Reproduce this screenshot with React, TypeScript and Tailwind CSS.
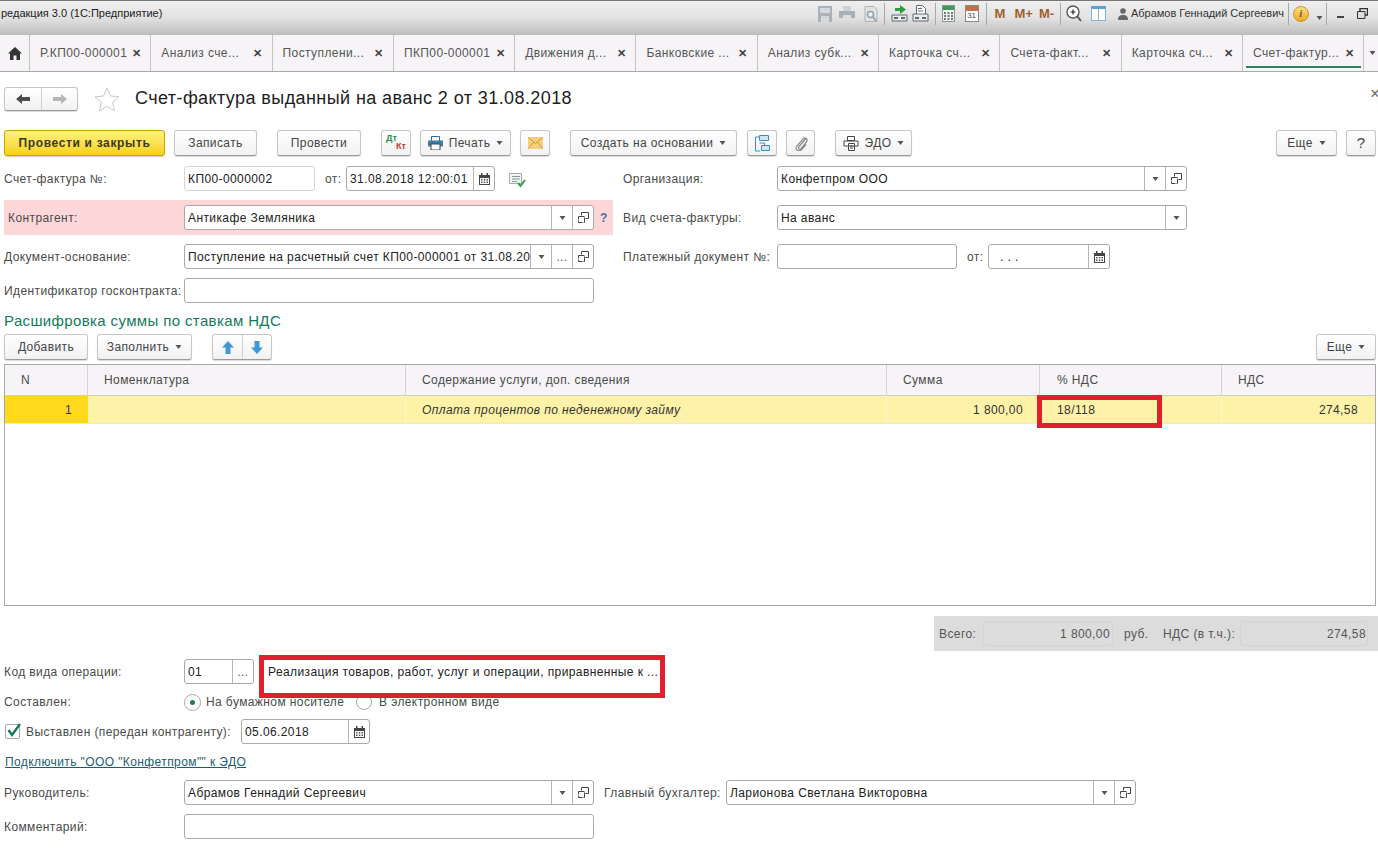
import React from "react";

const Caret = ({ className = "" }: { className?: string }) => (
  <svg width="7" height="4" viewBox="0 0 7 4" className={className}>
    <path d="M0.5 0h6L3.5 4z" fill="#555" />
  </svg>
);

const OpenIcon = () => (
  <svg width="11" height="11" viewBox="0 0 11 11" fill="none" stroke="#444">
    <path d="M3.5 3.5V.5h7v6H7.5" />
    <path d="M.5 4.5h6v6h-6z" fill="none" strokeDasharray="6 1" />
  </svg>
);

const CalIcon = () => (
  <svg width="11" height="12" viewBox="0 0 11 12">
    <path d="M0 2h11v10H0z" fill="#444" />
    <path d="M2 0h1.500v3H2zM7.500 0H9v3H7.500z" fill="#444" />
    <path d="M1 5h9v6H1z" fill="#fff" />
    <path d="M2 6h1.500v1.500H2zM4.800 6h1.500v1.500H4.800zM7.500 6H9v1.500H7.500zM2 8.500h1.500V10H2zM4.800 8.500h1.500V10H4.800zM7.500 8.500H9V10H7.500z" fill="#555" />
  </svg>
);

type FieldBtn = "caret" | "open" | "dots" | "cal";

const Field = ({
  w,
  value,
  btns = [],
  btnW = 21,
  light = false,
  pl = "pl-[3px]",
}: {
  w: string;
  value?: string;
  btns?: FieldBtn[];
  btnW?: number;
  light?: boolean;
  pl?: string;
}) => (
  <div
    className={`${w} h-[25px] shrink-0 flex rounded-[3px] border bg-white overflow-hidden ${
      light ? "border-[#d6d6d6]" : "border-[#a9a9a9]"
    }`}
  >
    <div className={`flex-1 min-w-0 ${pl} flex items-center whitespace-nowrap overflow-hidden text-[#222]`}>
      {value}
    </div>
    {btns.map((b, i) => (
      <div
        key={i}
        style={{ width: btnW }}
        className="shrink-0 border-l border-[#b5b5b5] flex items-center justify-center text-[#555]"
      >
        {b === "caret" && <Caret />}
        {b === "open" && <OpenIcon />}
        {b === "dots" && <span className="leading-none">...</span>}
        {b === "cal" && <CalIcon />}
      </div>
    ))}
  </div>
);

const Btn = ({
  w,
  children,
  caret,
  className = "",
}: {
  w: string;
  children: React.ReactNode;
  caret?: boolean;
  className?: string;
}) => (
  <div
    className={`${w} h-[26px] shrink-0 flex items-center justify-center gap-[6px] rounded-[3px] border border-[#c6c6c6] border-b-[#9a9a9a] bg-gradient-to-b from-white to-[#f1f1f1] shadow-[0_1px_1px_rgba(0,0,0,0.15)] text-[#444] ${className}`}
  >
    {children}
    {caret && <Caret />}
  </div>
);

const tabs = [
  "Р.КП00-000001",
  "Анализ сче...",
  "Поступлени...",
  "ПКП00-000001",
  "Движения д...",
  "Банковские ...",
  "Анализ субк...",
  "Карточка сч...",
  "Счета-факт...",
  "Карточка сч...",
  "Счет-фактур...",
];

const Gap = ({ w }: { w: string }) => <div className={`${w} shrink-0`} />;

const Sep = ({ className }: { className: string }) => (
  <div className={`w-px h-[22px] bg-[#a8a8a8] shrink-0 ${className}`} />
);

const TopIcons = () => (
  <div className="flex items-center h-full">
    <svg width="14" height="16" viewBox="0 0 14 16">
      <path d="M0 0h14v16H0z" fill="#aab2b8" />
      <path d="M2 2h10v5H2zM3 10h8v6H3z" fill="#d5d9dc" />
    </svg>
    <svg width="16" height="15" viewBox="0 0 16 15" className="ml-[7px]">
      <path d="M4 0h8v5H4z" fill="#cfd3d6" />
      <path d="M0 5h16v7H0z" fill="#a9b0b5" />
      <path d="M4 9h8v6H4z" fill="#dcdfe1" />
    </svg>
    <svg width="14" height="16" viewBox="0 0 14 16" className="ml-[9px]">
      <path d="M1 .5h9l3 3v12H1z" fill="#e2e2e2" stroke="#aeb4b8" />
      <circle cx="6.500" cy="8.500" r="3" fill="#eef3f6" stroke="#8aa0ad" strokeWidth="1.500" />
      <path d="M9 11l3 4" stroke="#8aa0ad" strokeWidth="1.500" />
    </svg>
    <Sep className="ml-[6px]" />
    <svg width="17" height="17" viewBox="0 0 17 17" className="ml-[6px]">
      <path d="M1 10h15v6H1z" fill="#e8eaeb" stroke="#5f6b73" />
      <path d="M3 12h4v2H3zM10 12h4v2h-4z" fill="#5f6b73" />
      <path d="M6 3H1v3h5v3l6-4.500L6 0z" fill="#2f9b3c" transform="translate(3 0)" />
    </svg>
    <svg width="17" height="17" viewBox="0 0 17 17" className="ml-[4px]">
      <path d="M4.500.5h6l3 3v6h-9z" fill="#fff" stroke="#5f6b73" />
      <path d="M1 9h15v7H1z" fill="#e8eaeb" stroke="#5f6b73" />
      <path d="M3 12h4v2H3zM10 12h4v2h-4zM6 3h4v1H6zM6 5.500h5v1H6z" fill="#5f6b73" />
    </svg>
    <Sep className="ml-[6px]" />
    <svg width="13" height="17" viewBox="0 0 13 17" className="ml-[6px]">
      <path d="M0 0h13v17H0z" fill="#8a9a92" />
      <path d="M1 1h11v4H1z" fill="#3d9a5a" />
      <path d="M1 5h11v11H1z" fill="#f3f3f3" />
      <path d="M2 7h2v2H2zM5.500 7h2v2h-2zM9 7h2v2H9zM2 10h2v2H2zM5.500 10h2v2h-2zM9 10h2v2H9zM2 13h2v2H2zM5.500 13h2v2h-2zM9 13h2v2H9z" fill="#6f7f77" />
    </svg>
    <div className="ml-[10px] w-[14px] h-[17px] border border-[#888] bg-white relative flex items-end justify-center">
      <div className="absolute top-0 inset-x-0 h-[5px] bg-[#c2704a]" />
      <span className="text-[8px] leading-[11px] tracking-normal text-[#445]">31</span>
    </div>
    <Sep className="ml-[7px]" />
    <span className="ml-[8px] text-[13px] tracking-normal font-bold text-[#a0602e]">М</span>
    <span className="ml-[9px] text-[13px] tracking-normal font-bold text-[#a0602e]">М+</span>
    <span className="ml-[6px] text-[13px] tracking-normal font-bold text-[#a0602e]">М-</span>
    <Sep className="ml-[6px]" />
    <svg width="16" height="17" viewBox="0 0 16 17" className="ml-[5px]">
      <circle cx="7" cy="7" r="6" fill="#fff" stroke="#555" strokeWidth="1.400" />
      <path d="M4.500 7h5M7 4.500v5" stroke="#222" strokeWidth="1.200" />
      <path d="M11 11l4 5" stroke="#555" strokeWidth="2" />
    </svg>
    <div className="ml-[9px] w-[15px] h-[15px] border border-[#7fb2d4] border-t-[3px] border-t-[#5da3d2] flex bg-white">
      <div className="w-1/2 border-r border-[#7fb2d4]" />
    </div>
    <svg width="10" height="12" viewBox="0 0 10 12" className="ml-[12px]">
      <circle cx="5" cy="3" r="2.800" fill="#666" />
      <path d="M0 12c0-4 2-5 5-5s5 1 5 5z" fill="#666" />
    </svg>
    <span className="ml-[3px] text-[#333] text-[11px] tracking-[-0.03px]">Абрамов Геннадий Сергеевич</span>
    <Sep className="ml-[4px]" />
    <div className="ml-[4px] w-[16px] h-[16px] rounded-full bg-gradient-to-b from-[#fbdf7e] to-[#eaa91f] border border-[#c9962c] flex items-center justify-center text-[11px] font-bold italic leading-none text-[#7c5a10] font-['Liberation_Serif']">
      i
    </div>
    <Caret className="ml-[7px] mt-[8px]" />
    <Sep className="ml-[3px]" />
    <div className="ml-[10px] mt-[6px] w-[7px] h-[2px] bg-[#444]" />
    <svg width="11" height="11" viewBox="0 0 11 11" className="ml-[13px]" fill="none" stroke="#333">
      <path d="M3 3V.5h7.500v6.500H8" strokeWidth="1.400" />
      <path d="M.5 3.500H8v7H.5z" fill="#ddd" />
    </svg>
  </div>
);

export default function App() {
  return (
    <div className="w-[1378px] h-[848px] overflow-hidden bg-white relative text-[12px] tracking-[0.4px] text-[#4a4a4a] font-['Liberation_Sans',Arial,sans-serif]">
      {/* заголовок окна */}
      <div className="h-[35px] border-t border-[#777] bg-gradient-to-b from-[#efefef] via-[#e2e2e2] to-[#bdbdbd] flex items-center justify-between pb-[9px]">
        <span className="pl-[1px] text-[#222] text-[11px] tracking-normal">редакция 3.0 (1С:Предприятие)</span>
        <div className="pr-[10px] h-full flex items-center">
          <TopIcons />
        </div>
      </div>

      {/* панель открытых */}
      <div className="h-[37px] flex bg-[#f6f4f7] border-b border-[#a9a9a9]">
        <div className="w-[30px] shrink-0 border-r border-[#c4c4c4] flex items-center justify-center">
          <svg width="14" height="13" viewBox="0 0 14 13">
            <path d="M7 0l7 6.500h-2V13H8.500V8.500h-3V13H2V6.500H0z" fill="#333" />
          </svg>
        </div>
        {tabs.map((t, i) => (
          <div
            key={i}
            className="w-[121.300px] shrink-0 border-r border-[#c4c4c4] flex items-center justify-between pl-[10px] pr-[9px] relative whitespace-nowrap text-[#555]"
          >
            <span>{t}</span>
            <span className="text-[#444] font-bold text-[11px]">✕</span>
            {i === tabs.length - 1 && (
              <div className="absolute left-[3px] right-[2px] bottom-[3px] h-[2px] bg-[#2f7f5f]" />
            )}
          </div>
        ))}
        <div className="flex-1 flex items-center justify-end pr-[2px]">
          <Caret />
        </div>
      </div>

      {/* название документа */}
      <div className="h-[50px] flex items-center pl-[4px] pt-[3px] relative">
        <div className="w-[74px] h-[24px] flex rounded-[3px] border border-[#c6c6c6] border-b-[#9a9a9a] bg-gradient-to-b from-white to-[#f1f1f1] shadow-[0_1px_1px_rgba(0,0,0,0.15)]">
          <div className="w-[37px] border-r border-[#d0d0d0] flex items-center justify-center">
            <svg width="14" height="10" viewBox="0 0 14 10">
              <path d="M0 5l6-5v3h8v4H6v3z" fill="#4d4d4d" />
            </svg>
          </div>
          <div className="flex-1 flex items-center justify-center">
            <svg width="14" height="10" viewBox="0 0 14 10">
              <path d="M14 5L8 0v3H0v4h8v3z" fill="#b5b5b5" />
            </svg>
          </div>
        </div>
        <svg width="26" height="24" viewBox="0 0 26 24" className="ml-[16px]">
          <path d="M13 1l3.500 8 8.500.8-6.400 5.700 1.900 8.300L13 19.400l-7.500 4.400 1.900-8.300L1 9.800 9.500 9z" fill="#fff" stroke="#c9c9c9" />
        </svg>
        <span className="ml-[15px] text-[18px] tracking-[0.41px] text-[#1d1d1d]">Счет-фактура выданный на аванс 2 от 31.08.2018</span>
        <span className="absolute -right-[2px] top-[10px] text-[#666] text-[16px]">×</span>
      </div>

      {/* командная панель */}
      <div className="mt-[8px] pl-[4px] pr-[2px] h-[26px] flex items-center">
        <div className="w-[161px] h-[26px] flex items-center justify-center rounded-[3px] border border-[#c9a400] bg-gradient-to-b from-[#fff27a] to-[#f7d100] shadow-[0_1px_1px_rgba(0,0,0,0.2)] font-bold tracking-[0.65px] text-[#3a3a1a]">
          Провести и закрыть
        </div>
        <Gap w="w-[9px]" />
        <Btn w="w-[83px]">Записать</Btn>
        <Gap w="w-[20px]" />
        <Btn w="w-[84px]">Провести</Btn>
        <Gap w="w-[20px]" />
        <Btn w="w-[30px]">
          <span className="relative block w-[20px] h-[20px] text-[9px] tracking-normal font-bold leading-none">
            <span className="absolute left-0 top-[1px] text-[#2d8a4a]">Дт</span>
            <span className="absolute right-0 top-[9px] text-[#c23a3a]">Кт</span>
          </span>
        </Btn>
        <Gap w="w-[9px]" />
        <Btn w="w-[91px]" caret>
          <svg width="15" height="14" viewBox="0 0 15 14">
            <path d="M3.500 .5h8v5h-8z" fill="#fff" stroke="#2f6d8f" />
            <path d="M0 4.500h15v6H0z" fill="#3d7fa3" />
            <path d="M3 8h9v6H3z" fill="#fff" stroke="#444" />
          </svg>
          Печать
        </Btn>
        <Gap w="w-[9px]" />
        <Btn w="w-[30px]">
          <svg width="15" height="12" viewBox="0 0 15 12">
            <path d="M0 0h15v12H0z" fill="#f6cf7c" />
            <path d="M.5.500l7 6 7-6M.5 11.500l5-6.500M14.500 11.500l-5-6.500" fill="none" stroke="#c99a3c" />
          </svg>
        </Btn>
        <Gap w="w-[20px]" />
        <Btn w="w-[167px]" caret>Создать на основании</Btn>
        <Gap w="w-[10px]" />
        <Btn w="w-[30px]">
          <svg width="15" height="17" viewBox="0 0 15 17" fill="none">
            <path d="M4.500 .5h9v5h-9zM6.500 10.500h8v5h-8z" fill="#cfe3f1" stroke="#3d8fc0" />
            <path d="M4 2H.5v14H5M4.500 8h5v2.500" stroke="#3d8fc0" />
          </svg>
        </Btn>
        <Gap w="w-[9px]" />
        <Btn w="w-[29px]">
          <svg width="14" height="16" viewBox="0 0 14 16" fill="none" stroke="#888" strokeWidth="1.200">
            <path d="M11.500 4L5 11.500c-1.500 1.700.7 3.500 2.200 1.800l5-6c2.600-3-1-6-3.500-3L2.800 11c-2.600 3.600 2 6.700 5 3.300L12 9.500" />
          </svg>
        </Btn>
        <Gap w="w-[20px]" />
        <Btn w="w-[77px]" caret>
          <svg width="16" height="15" viewBox="0 0 16 15" fill="none" stroke="#444">
            <path d="M4.500.5h7v4h-7zM1 5h14v5H1zM5.500 7.500h6v7h-6z" fill="#fff" />
            <path d="M7 10h3M7 12h3" />
          </svg>
          ЭДО
        </Btn>
        <div className="flex-1" />
        <Btn w="w-[61px]" caret>Еще</Btn>
        <Gap w="w-[9px]" />
        <Btn w="w-[30px]" className="text-[15px] text-[#333]">?</Btn>
      </div>

      {/* реквизиты шапки */}
      <div className="mt-[10px] flex">
        <div className="w-[613px] ml-[4px] shrink-0">
          <div className="h-[25px] flex items-center">
            <span className="w-[180px] shrink-0">Счет-фактура №:</span>
            <Field w="w-[131px]" value="КП00-0000002" light />
            <span className="w-[31px] pl-[10px] shrink-0">от:</span>
            <Field w="w-[149px]" value="31.08.2018 12:00:01" btns={["cal"]} />
            <svg width="17" height="14" viewBox="0 0 17 14" className="ml-[14px] mt-[3px]">
              <path d="M.5.500h12v10H.5z" fill="#f4f4f4" stroke="#9db0ab" />
              <path d="M3 3.500h8M3 6h8M3 8.500h5" stroke="#7b9a92" />
              <path d="M9 10l2.500 3L16 7" fill="none" stroke="#3e9b50" strokeWidth="2" />
            </svg>
          </div>
          <div className="mt-[9px] w-[609px] h-[35px] bg-[#fdd7d7] flex items-center">
            <span className="w-[180px] pl-[4px] shrink-0">Контрагент:</span>
            <Field w="w-[410px]" value="Антикафе Земляника" btns={["caret", "open"]} />
            <span className="pl-[6px] font-bold text-[#4a6fa5]">?</span>
          </div>
          <div className="mt-[9px] h-[25px] flex items-center">
            <span className="w-[180px] shrink-0">Документ-основание:</span>
            <Field
              w="w-[410px]"
              value="Поступление на расчетный счет КП00-000001 от 31.08.2018"
              btns={["caret", "dots", "open"]}
            />
          </div>
          <div className="mt-[9px] h-[25px] flex items-center">
            <span className="w-[180px] shrink-0 whitespace-nowrap">Идентификатор госконтракта:</span>
            <Field w="w-[410px]" />
          </div>
        </div>
        <div className="ml-[6px] flex-1">
          <div className="h-[25px] flex items-center">
            <span className="w-[154px] shrink-0">Организация:</span>
            <Field w="w-[410px]" value="Конфетпром ООО" btns={["caret", "open"]} />
          </div>
          <div className="mt-[14px] h-[25px] flex items-center">
            <span className="w-[154px] shrink-0">Вид счета-фактуры:</span>
            <Field w="w-[410px]" value="На аванс" btns={["caret"]} />
          </div>
          <div className="mt-[14px] h-[25px] flex items-center">
            <span className="w-[154px] shrink-0 whitespace-nowrap">Платежный документ №:</span>
            <Field w="w-[180px]" />
            <span className="w-[31px] pl-[10px] shrink-0">от:</span>
            <Field w="w-[122px]" value=". . ." pl="pl-[11px]" btns={["cal"]} />
          </div>
        </div>
      </div>

      {/* табличная часть */}
      <div className="mt-[9px] pl-[4px] h-[18px] flex items-center text-[15px] tracking-[0.37px] text-[#137a5c]">
        Расшифровка суммы по ставкам НДС
      </div>
      <div className="mt-[4px] pl-[4px] pr-[2px] h-[26px] flex items-center">
        <Btn w="w-[84px]">Добавить</Btn>
        <Gap w="w-[9px]" />
        <Btn w="w-[95px]" caret>Заполнить</Btn>
        <Gap w="w-[20px]" />
        <div className="w-[60px] h-[26px] flex rounded-[3px] border border-[#c6c6c6] border-b-[#9a9a9a] bg-gradient-to-b from-white to-[#f1f1f1] shadow-[0_1px_1px_rgba(0,0,0,0.15)]">
          <div className="w-[30px] border-r border-[#d0d0d0] flex items-center justify-center">
            <svg width="12" height="13" viewBox="0 0 12 13">
              <path d="M6 0l6 6.500H8.500V13h-5V6.500H0z" fill="#3f97d6" />
            </svg>
          </div>
          <div className="flex-1 flex items-center justify-center">
            <svg width="12" height="13" viewBox="0 0 12 13">
              <path d="M6 13l6-6.500H8.500V0h-5v6.500H0z" fill="#3f97d6" />
            </svg>
          </div>
        </div>
        <div className="flex-1" />
        <Btn w="w-[60px]" caret>Еще</Btn>
      </div>
      <div className="mt-[4px] mx-[4px] mr-[2px] h-[242px] border border-[#a9a9a9] flex flex-col">
        <div className="h-[31px] flex bg-[#f6f4f7] border-b border-[#cfcfcf]">
          <div className="w-[83px] pl-[16px] border-r border-[#d4d4d4] flex items-center">N</div>
          <div className="w-[318px] pl-[16px] border-r border-[#d4d4d4] flex items-center">Номенклатура</div>
          <div className="w-[481px] pl-[16px] border-r border-[#d4d4d4] flex items-center">Содержание услуги, доп. сведения</div>
          <div className="w-[153px] pl-[16px] border-r border-[#d4d4d4] flex items-center">Сумма</div>
          <div className="w-[182px] pl-[17px] border-r border-[#d4d4d4] flex items-center">% НДС</div>
          <div className="flex-1 pl-[16px] flex items-center">НДС</div>
        </div>
        <div className="h-[28px] flex bg-[#fdf2a8] border-b border-[#efe9c8] text-[#333]">
          <div className="w-[83px] pr-[16px] bg-[#ffd91a] flex items-center justify-end">1</div>
          <div className="w-[318px] border-r border-[#fbf6d4]" />
          <div className="w-[481px] pl-[16px] border-r border-[#fbf6d4] flex items-center italic">Оплата процентов по неденежному займу</div>
          <div className="w-[153px] pr-[16px] border-r border-[#fbf6d4] flex items-center justify-end">1 800,00</div>
          <div className="w-[182px] pl-[17px] border-r border-[#fbf6d4] flex items-center">18/118</div>
          <div className="flex-1 pr-[17px] flex items-center justify-end">274,58</div>
        </div>
      </div>

      {/* итоги */}
      <div className="mt-[10px] ml-[934px] h-[35px] bg-[#dcdcdc] flex items-center pl-[5px] text-[#555]">
        <span className="w-[44px] shrink-0">Всего:</span>
        <div className="w-[130px] h-[25px] shrink-0 border border-[#d4d4d4] rounded-[3px] flex items-center justify-end pr-[2px]">1 800,00</div>
        <span className="ml-[11px] w-[39px] shrink-0">руб.</span>
        <span className="w-[77px] shrink-0 whitespace-nowrap">НДС (в т.ч.):</span>
        <div className="w-[128px] h-[25px] shrink-0 border border-[#d4d4d4] rounded-[3px] flex items-center justify-end pr-[1px]">274,58</div>
      </div>

      {/* низ формы */}
      <div className="mt-[8px] pl-[4px]">
        <div className="h-[25px] flex items-center">
          <span className="w-[180px] shrink-0">Код вида операции:</span>
          <Field w="w-[70px]" value="01" btns={["dots"]} />
          <span className="ml-[14px] whitespace-nowrap text-[#222]">Реализация товаров, работ, услуг и операции, приравненные к ...</span>
        </div>
        <div className="mt-[8px] h-[20px] flex items-center">
          <span className="w-[180px] shrink-0">Составлен:</span>
          <span className="w-[17px] h-[17px] rounded-full border border-[#a9a9a9] flex items-center justify-center shrink-0">
            <span className="w-[5px] h-[5px] rounded-full bg-[#1d7a5c]" />
          </span>
          <span className="ml-[5px] w-[140px] shrink-0 whitespace-nowrap">На бумажном носителе</span>
          <span className="ml-[10px] w-[16px] h-[16px] rounded-full border border-[#a9a9a9] shrink-0" />
          <span className="ml-[7px] whitespace-nowrap">В электронном виде</span>
        </div>
        <div className="mt-[7px] h-[25px] flex items-center">
          <span className="ml-[1px] w-[15px] h-[15px] border border-[#a9a9a9] rounded-[2px] relative shrink-0">
            <svg width="16" height="16" viewBox="0 0 16 16" className="absolute left-0 -top-[3px]">
              <path d="M2.500 8l3.500 5L14 2" fill="none" stroke="#177a57" strokeWidth="2.400" />
            </svg>
          </span>
          <span className="ml-[6px] w-[215px] shrink-0 whitespace-nowrap">Выставлен (передан контрагенту):</span>
          <Field w="w-[129px]" value="05.06.2018" btns={["cal"]} />
        </div>
        <div className="mt-[9px] ml-[1px] h-[18px] flex items-center text-[#1a5d74] underline">
          Подключить "ООО "Конфетпром"" к ЭДО
        </div>
        <div className="mt-[9px] h-[25px] flex items-center">
          <span className="w-[180px] shrink-0">Руководитель:</span>
          <Field w="w-[410px]" value="Абрамов Геннадий Сергеевич" btns={["caret", "open"]} />
          <span className="ml-[10px] w-[122px] shrink-0 whitespace-nowrap">Главный бухгалтер:</span>
          <Field w="w-[410px]" value="Ларионова Светлана Викторовна" btns={["caret", "open"]} />
        </div>
        <div className="mt-[9px] h-[25px] flex items-center">
          <span className="w-[180px] shrink-0">Комментарий:</span>
          <Field w="w-[410px]" />
        </div>
      </div>

      {/* красные рамки поверх */}
      <div className="absolute left-[1037px] top-[395px] w-[125px] h-[33px] border-[5px] border-[#e0202c]" />
      <div className="absolute left-[259px] top-[655px] w-[406px] h-[43px] border-[5px] border-[#e0202c]" />
    </div>
  );
}
